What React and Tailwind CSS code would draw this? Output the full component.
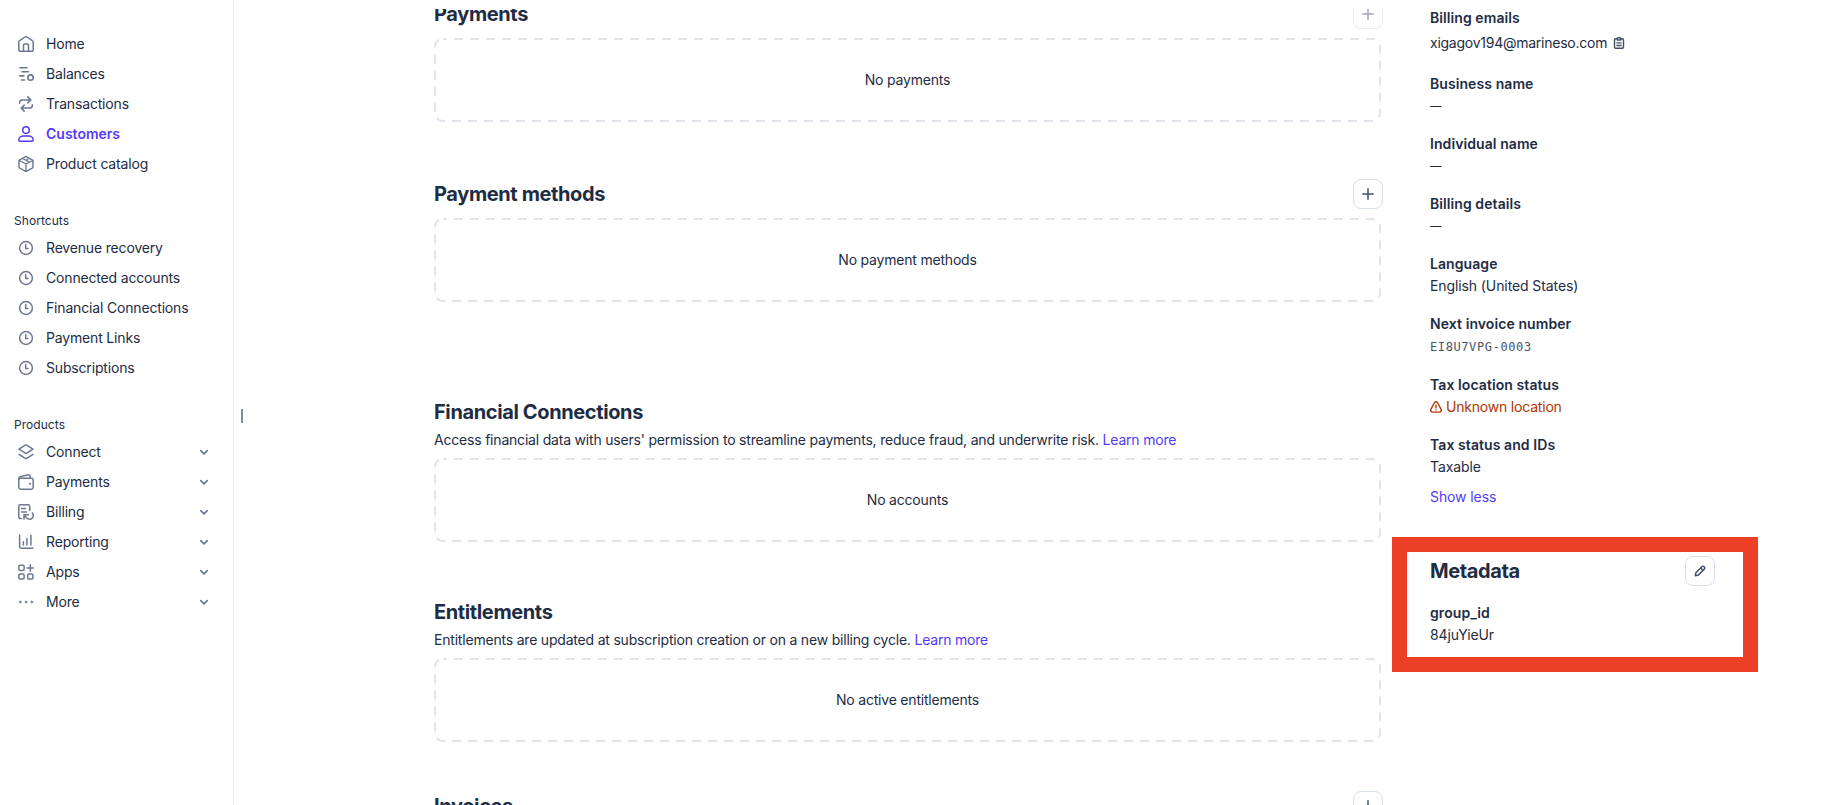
import React from 'react';

const Icon = ({ children, className = 'w-4 h-4 text-[#6c7893]', box = '0 0 16 16', sw = 1.5 }) => (
  <svg
    viewBox={box}
    className={`shrink-0 ${className}`}
    fill="none"
    stroke="currentColor"
    strokeWidth={sw}
    strokeLinecap="round"
    strokeLinejoin="round"
  >
    {children}
  </svg>
);

const icons = {
  home: (
    <>
      <path d="M.8 6.1c0-.6.3-1.200.8-1.500L7 1c.6-.4 1.400-.4 2 0l5.400 3.600c.5.300.8.900.8 1.500v7.300c0 1-.8 1.800-1.800 1.800H2.600c-1 0-1.800-.8-1.800-1.800z" />
      <path d="M5.500 15V8.800c0-.5.400-.9.900-.9h3.200c.5 0 .9.400.9.900V15" />
    </>
  ),
  balances: (
    <>
      <path d="M2 1.800h7M4 5.800h6.500M1.800 9.900h4M3.500 14h3" strokeWidth="1.600" />
      <circle cx="12.500" cy="11.600" r="2.700" strokeWidth="1.600" />
    </>
  ),
  transactions: (
    <>
      <path d="M1.700 7.200v-.7c0-1.500 1.100-2.600 2.600-2.600h8.200M9.800.9l3 3-3 3" />
      <path d="M14.300 8.800v.7c0 1.500-1.100 2.600-2.600 2.600H3.500M6.200 15.100l-3-3 3-3" />
    </>
  ),
  customers: (
    <>
      <circle cx="8" cy="4.100" r="3.300" />
      <path d="M.8 14c0-2.300 2.200-4 4.600-4h5.200c2.400 0 4.600 1.700 4.600 4 0 .7-.5 1.200-1.200 1.200H2c-.7 0-1.200-.5-1.200-1.200z" />
    </>
  ),
  catalog: (
    <>
      <path d="M1 5.100c0-.6.3-1 .8-1.300L7.200.9c.5-.3 1.100-.3 1.600 0l5.400 2.900c.5.300.8.700.8 1.300v5.800c0 .6-.3 1-.8 1.300l-5.400 2.900c-.5.300-1.100.3-1.600 0l-5.400-2.900c-.5-.3-.8-.7-.8-1.300z" />
      <path d="M1.300 4.500 8 8l6.700-3.500M8 8v7M4.700 2.500l6.600 3.600M8 4.200l2.500-1.400" strokeWidth="1.300" />
    </>
  ),
  clock: (
    <>
      <circle cx="8" cy="8" r="6.400" />
      <path d="M7.700 4.500v4h2.200" />
    </>
  ),
  connect: (
    <>
      <path d="M7.300 1.100c.4-.2 1-.2 1.400 0l6.300 4-6.300 4c-.4.200-1 .2-1.400 0L1 5.100z" />
      <path d="m1 10.300 6.300 4c.4.200 1 .2 1.400 0l6.300-4" />
    </>
  ),
  wallet: (
    <>
      <rect x=".8" y="4.300" width="14.400" height="10.900" rx="1.700" />
      <path d="M.8 6V4.300c0-.8.500-1.400 1.300-1.600L10.300.8c.9-.2 1.700.4 1.700 1.300v2" />
      <circle cx="11.900" cy="9.700" r=".7" fill="currentColor" strokeWidth=".8" />
    </>
  ),
  billing: (
    <>
      <path d="M3.300 14.600H2.400c-.9 0-1.600-.7-1.600-1.600V2.400C.8 1.500 1.500.8 2.400.8h7.700c.9 0 1.600.7 1.600 1.600v4.200M3.700 4.500h3.800M3.700 8h4.700" />
      <path d="M6 15.200v-4.400h4.300M6.300 11.100l2.100 2.700c1.400 1.600 4.400 1.900 5.900.1 1.200-1.500 1.100-3.500 0-4.900" />
    </>
  ),
  reporting: <path d="M1.600.9v11.300c0 1.200.8 2 2 2h11.300M5.400 7.800v3.200M8.900 4.500V11M12.900 1.300V11" />,
  apps: (
    <>
      <rect x=".9" y="1.300" width="5.200" height="5.200" rx="1.200" />
      <rect x=".9" y="9.900" width="5.200" height="5.200" rx="1.200" />
      <rect x="9.700" y="9.900" width="5.200" height="5.200" rx="1.200" />
      <path d="M12.300.8v6.400M9.100 4h6.400" />
    </>
  ),
  more: (
    <g fill="currentColor" strokeWidth=".6">
      <circle cx="2.200" cy="8" r="1" />
      <circle cx="8" cy="8" r="1" />
      <circle cx="13.800" cy="8" r="1" />
    </g>
  ),
};

const mainLinks = [
  { icon: 'home', label: 'Home' },
  { icon: 'balances', label: 'Balances' },
  { icon: 'transactions', label: 'Transactions' },
  { icon: 'customers', label: 'Customers', active: true },
  { icon: 'catalog', label: 'Product catalog' },
];

const shortcuts = ['Revenue recovery', 'Connected accounts', 'Financial Connections', 'Payment Links', 'Subscriptions'].map(
  (label) => ({ icon: 'clock', label })
);

const products = [
  { icon: 'connect', label: 'Connect' },
  { icon: 'wallet', label: 'Payments' },
  { icon: 'billing', label: 'Billing' },
  { icon: 'reporting', label: 'Reporting' },
  { icon: 'apps', label: 'Apps' },
  { icon: 'more', label: 'More' },
];

const NavList = ({ title, items, expandable }) => (
  <div>
    {title && <div className="h-6 pl-3.5 text-xs leading-6 tracking-[0.05px]">{title}</div>}
    <ul>
      {items.map(({ icon, label, active }) => (
        <li key={label} className={`flex h-[30px] items-center pl-[18px] pr-[23px] ${active ? 'font-semibold tracking-normal text-[#533afd]' : 'tracking-[-0.17px]'}`}>
          <Icon className={active ? 'w-4 h-4 text-[#533afd]' : 'w-4 h-4 text-[#6c7893]'}>{icons[icon]}</Icon>
          <span className="ml-3 flex-1">{label}</span>
          {expandable && (
            <Icon className="w-3 h-3 text-[#6c7893]" box="0 0 12 12" sw={1.7}>
              <path d="m2.800 4.700 3.200 3.100 3.200-3.100" />
            </Icon>
          )}
        </li>
      ))}
    </ul>
  </div>
);

const IconButton = ({ children, className = '' }) => (
  <button className={`flex h-[30px] w-[30px] items-center justify-center rounded-lg border border-[#d8deeb] bg-white ${className}`}>
    {children}
  </button>
);

const Plus = () => (
  <Icon className="w-3 h-3 text-[#414f6b]" box="0 0 12 12" sw={1.5}>
    <path d="M6 .8v10.400M.8 6h10.400" />
  </Icon>
);

const EmptyBox = ({ children }) => (
  <div className="relative flex h-[84px] w-[947px] items-center justify-center">
    <svg className="absolute inset-0" width="947" height="84" fill="none">
      <rect x="1" y="1" width="945" height="82" rx="8" stroke="#dfe4ee" strokeWidth="2" strokeDasharray="9 7" strokeDashoffset="5" />
    </svg>
    <span className="relative">{children}</span>
  </div>
);

const Section = ({ title, text, empty, add, faded, className = '' }) => (
  <section className={className}>
    <div className="flex h-[30px] w-[949px] items-center justify-between">
      <h2 className="text-xl font-bold tracking-[-0.38px]">{title}</h2>
      {add && <IconButton className={faded ? 'opacity-50' : ''}><Plus /></IconButton>}
    </div>
    {text && (
      <p className="mt-[3px] h-5 leading-5 tracking-[-0.2px]">
        {text} <a className="text-[#533afd]">Learn more</a>
      </p>
    )}
    {empty && <div className={text ? 'mt-2' : 'mt-[9px]'}><EmptyBox>{empty}</EmptyBox></div>}
  </section>
);

const Field = ({ label, children, className = '' }) => (
  <div className={className}>
    <div className="h-5 font-semibold leading-5 tracking-[0.08px]">{label}</div>
    <div className="mt-0.5 flex h-5 items-center leading-5 tracking-[-0.1px]">
      {children || <span className="text-[11.5px]">—</span>}
    </div>
  </div>
);

function App() {
  return (
    <div className="flex h-[805px] w-[1825px] overflow-hidden bg-white font-[Inter,sans-serif] text-sm tracking-[-0.2px] text-[#1e2c44]">
      <nav className="flex w-[234px] shrink-0 flex-col gap-[30px] border-r border-[#ebedf1] pt-[29px]">
        <NavList items={mainLinks} />
        <NavList title="Shortcuts" items={shortcuts} />
        <NavList title="Products" items={products} expandable />
      </nav>
      <div className="ml-[7px] mt-[409px] h-[14px] w-0.5 shrink-0 bg-[#818ba5]" />

      <div className="mt-[9px] flex h-[796px] overflow-hidden">
        <main className="ml-[191px] w-[949px] shrink-0">
          <Section title="Payments" empty="No payments" add faded className="-mt-[10px]" />
          <Section title="Payment methods" empty="No payment methods" add className="mt-[57px]" />
          <Section title="Financial Connections" text="Access financial data with users' permission to streamline payments, reduce fraud, and underwrite risk." empty="No accounts" className="mt-[95px]" />
          <Section title="Entitlements" text="Entitlements are updated at subscription creation or on a new billing cycle." empty="No active entitlements" className="mt-[55px]" />
          <Section title="Invoices" add className="mt-[49px]" />
        </main>

        <aside className="ml-[9px] w-[366px] shrink-0">
          <div className="pl-[38px]">
            <Field label="Billing emails" className="-mt-px">
              <span className="mt-[5px] tracking-[-0.25px]">xigagov194@marineso.com</span>
              <Icon className="ml-1.5 mt-[5px] w-3 h-3 text-[#414f6b]" box="0 0 12 12" sw={1.4}>
                <path d="M4 1.700H2.700c-.7 0-1.200.5-1.200 1.200v7.200c0 .7.500 1.200 1.200 1.200h6.600c.7 0 1.200-.5 1.200-1.200V2.900c0-.7-.5-1.200-1.200-1.200H8" />
                <path d="M4.200 3V1.800c0-.6.500-1.100 1.100-1.100h1.400c.6 0 1.100.5 1.100 1.100V3zM3.900 5.900h4.200M3.900 8.500h4.200" />
              </Icon>
            </Field>
            <Field label="Business name" className="mt-6" />
            <Field label="Individual name" className="mt-[18px]" />
            <Field label="Billing details" className="mt-[18px]" />
            <Field label="Language" className="mt-[18px]">English (United States)</Field>
            <Field label="Next invoice number" className="mt-[18px]">
              <span className="mt-0.5 font-['DejaVu_Sans_Mono',monospace] text-xs tracking-[0.6px] text-[#4b5468]">EI8U7VPG-0003</span>
            </Field>
            <Field label="Tax location status" className="mt-[19px]">
              <Icon className="w-3 h-3 text-[#b13600]" box="0 0 12 12" sw={1.4}>
                <path d="M4.600 1.500c.6-1 2.200-1 2.800 0l3.600 6.700c.7 1.300-.1 2.900-1.600 2.900H2.600C1.100 11.100.3 9.500 1 8.200zM6 4.200v2.600M6 8.800v.1" />
              </Icon>
              <span className="ml-1 tracking-[-0.2px] text-[#b13600]">Unknown location</span>
            </Field>
            <Field label="Tax status and IDs" className="mt-[18px]">Taxable</Field>
            <a className="mt-2.5 block h-5 leading-5 tracking-[-0.1px] text-[#533afd]">Show less</a>
          </div>

          <div className="mt-[30px] h-[135px] border-[15px] border-[#ec4026] pl-[23px] pr-7 pt-1">
            <div className="flex h-[30px] items-center justify-between">
              <h2 className="text-xl font-bold tracking-[-0.38px]">Metadata</h2>
              <IconButton>
                <Icon className="w-3 h-3 text-[#414f6b]" box="0 0 12 12" sw={1.5}>
                  <path d="m1.900 7.700 5.900-5.900c.7-.7 1.700-.7 2.400 0s.7 1.700 0 2.400L4.300 10.100l-3 .6zM6.700 3l2.400 2.400" />
                </Icon>
              </IconButton>
            </div>
            <Field label="group_id" className="mt-[17px]">84juYieUr</Field>
          </div>
        </aside>
      </div>
    </div>
  );
}

export default App;
